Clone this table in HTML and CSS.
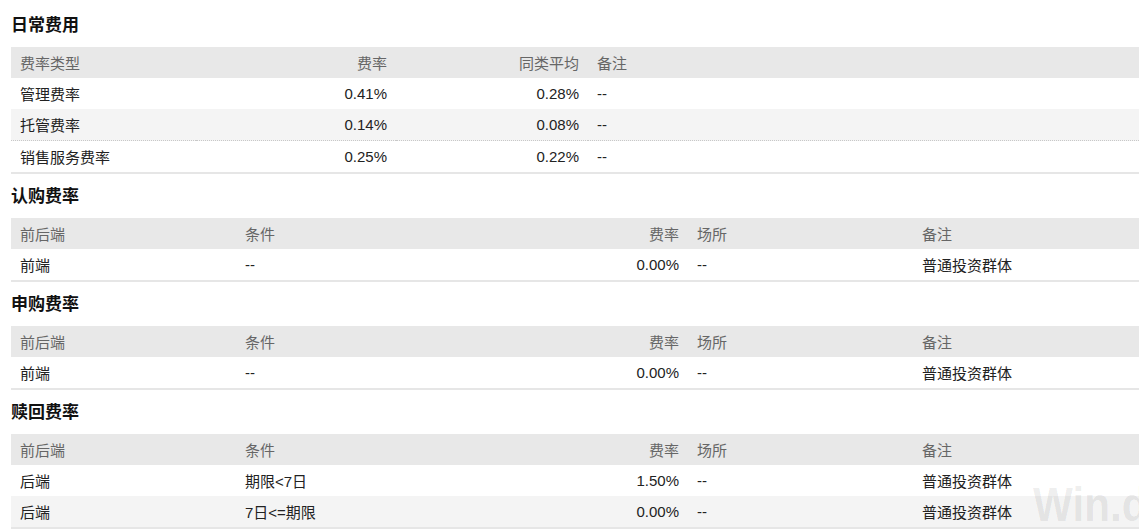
FILE: index.html
```html
<!DOCTYPE html>
<html lang="zh-CN">
<head>
<meta charset="utf-8">
<title>费率</title>
<link rel="stylesheet" href="styles.css">
</head>
<body>
<div class="page">
  <section class="sec">
    <h2 class="title">日常费用</h2>
    <table class="tbl daily">
      <colgroup><col class="d1"><col class="d2"><col class="d3"><col></colgroup>
      <thead><tr><th>费率类型</th><th class="r">费率</th><th class="r">同类平均</th><th>备注</th></tr></thead>
      <tbody>
        <tr><td>管理费率</td><td class="r">0.41%</td><td class="r">0.28%</td><td>--</td></tr>
        <tr class="alt dotted"><td>托管费率</td><td class="r">0.14%</td><td class="r">0.08%</td><td>--</td></tr>
        <tr><td>销售服务费率</td><td class="r">0.25%</td><td class="r">0.22%</td><td>--</td></tr>
      </tbody>
    </table>
  </section>
  <section class="sec">
    <h2 class="title">认购费率</h2>
    <table class="tbl fee">
      <colgroup><col class="f1"><col class="f2"><col class="f3"><col class="f4"><col></colgroup>
      <thead><tr><th>前后端</th><th>条件</th><th class="r">费率</th><th>场所</th><th>备注</th></tr></thead>
      <tbody>
        <tr><td>前端</td><td>--</td><td class="r">0.00%</td><td>--</td><td>普通投资群体</td></tr>
      </tbody>
    </table>
  </section>
  <section class="sec">
    <h2 class="title">申购费率</h2>
    <table class="tbl fee">
      <colgroup><col class="f1"><col class="f2"><col class="f3"><col class="f4"><col></colgroup>
      <thead><tr><th>前后端</th><th>条件</th><th class="r">费率</th><th>场所</th><th>备注</th></tr></thead>
      <tbody>
        <tr><td>前端</td><td>--</td><td class="r">0.00%</td><td>--</td><td>普通投资群体</td></tr>
      </tbody>
    </table>
  </section>
  <section class="sec">
    <h2 class="title">赎回费率</h2>
    <table class="tbl fee">
      <colgroup><col class="f1"><col class="f2"><col class="f3"><col class="f4"><col></colgroup>
      <thead><tr><th>前后端</th><th>条件</th><th class="r">费率</th><th>场所</th><th>备注</th></tr></thead>
      <tbody>
        <tr><td>后端</td><td>期限&lt;7日</td><td class="r">1.50%</td><td>--</td><td>普通投资群体</td></tr>
        <tr class="alt"><td>后端</td><td>7日&lt;=期限</td><td class="r">0.00%</td><td>--</td><td>普通投资群体</td></tr>
      </tbody>
    </table>
  </section>
  <div class="watermark">Win.d</div>
</div>
</body>
</html>
```

FILE: styles.css
```css
html, body {
  margin: 0;
  padding: 0;
  background: #fff;
}
body {
  font-family: "Liberation Sans", "Noto Sans CJK SC", sans-serif;
  font-size: 15px;
  color: #222;
}
.page {
  position: relative;
  width: 1128px;
  margin-left: 11px;
  padding-top: 3px;
  overflow: hidden;
  height: 529px;
}
.title {
  margin: 0;
  padding: 12px 0 11px;
  font-size: 17px;
  line-height: 21px;
  font-weight: bold;
  color: #111;
}
.tbl {
  width: 100%;
  border-collapse: separate;
  border-spacing: 0;
  table-layout: fixed;
  border-bottom: 2px solid #e6e6e6;
}
.tbl th, .tbl td {
  height: 31px;
  padding: 0 9px;
  text-align: left;
  font-weight: normal;
  white-space: nowrap;
  box-sizing: border-box;
  vertical-align: middle;
}
.tbl th {
  background: #e8e8e8;
  color: #666;
}
.tbl td { color: #222; }
.tbl .r { text-align: right; }
.tbl tr.alt td { background: #f4f4f4; }
.tbl tr.dotted td {
  height: 32px;
  border-bottom: 1px dotted #c8c8c8;
}
.daily .d1 { width: 185px; }
.daily .d2 { width: 200px; }
.daily .d3 { width: 192px; }
.fee .f1 { width: 225px; }
.fee .f2 { width: 225px; }
.fee .f3 { width: 227px; }
.fee .f4 { width: 225px; }
.watermark {
  position: absolute;
  left: 1022px;
  top: 480px;
  font-family: "Liberation Sans", sans-serif;
  font-size: 48px;
  line-height: 50px;
  font-weight: bold;
  color: rgba(0, 0, 0, 0.08);
  transform: scaleX(0.88);
  transform-origin: left top;
  pointer-events: none;
}
```
